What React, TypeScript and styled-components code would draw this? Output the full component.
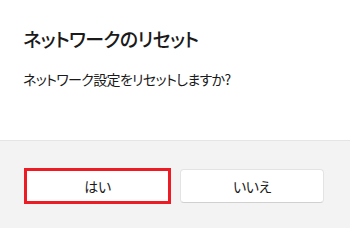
import styled, { createGlobalStyle } from "styled-components";

const GlobalStyle = createGlobalStyle`
  html, body {
    margin: 0;
    padding: 0;
    background: #ffffff;
  }
  body {
    font-family: "Noto Sans CJK JP", "Noto Sans", sans-serif;
    font-feature-settings: "palt";
    color: #1a1a1a;
  }
`;

const Dialog = styled.div`
  width: 350px;
  height: 228px;
  display: flex;
  flex-direction: column;
  background: #ffffff;
  overflow: hidden;
`;

const Content = styled.div`
  height: 140px;
  box-sizing: border-box;
  padding: 25px 24px 0 23px;
  display: flex;
  flex-direction: column;
  gap: 16px;
`;

const Title = styled.h1`
  margin: 0;
  font-size: 19px;
  line-height: 28px;
  font-weight: 500;
  letter-spacing: -0.6px;
`;

const Message = styled.p`
  margin: 0;
  font-size: 14px;
  line-height: 20px;
  font-weight: 400;
  letter-spacing: -0.65px;
`;

const Footer = styled.div`
  flex: 1;
  background: #f3f3f3;
  border-top: 1px solid #e5e5e5;
  box-sizing: border-box;
  padding: 27px 24px 0 24px;
  display: grid;
  grid-template-columns: 147px 144px;
  column-gap: 9px;
  align-items: start;
`;

const Button = styled.button<{ $focused?: boolean }>`
  box-sizing: border-box;
  height: ${(p) => (p.$focused ? "36px" : "34px")};
  margin-top: ${(p) => (p.$focused ? "0" : "1px")};
  background: #ffffff;
  border: ${(p) => (p.$focused ? "3px solid #ed1c24" : "1px solid #e3e3e3")};
  border-bottom-color: ${(p) => (p.$focused ? "#ed1c24" : "#d0d0d0")};
  border-radius: ${(p) => (p.$focused ? "0" : "4px")};
  font-family: inherit;
  font-feature-settings: "palt";
  font-size: 14px;
  letter-spacing: -0.4px;
  color: #1a1a1a;
  padding: 0;
  cursor: pointer;
`;

const App = () => {
  return (
    <>
      <GlobalStyle />
      <Dialog>
        <Content>
          <Title>ネットワークのリセット</Title>
          <Message>ネットワーク設定をリセットしますか?</Message>
        </Content>
        <Footer>
          <Button $focused>はい</Button>
          <Button>いいえ</Button>
        </Footer>
      </Dialog>
    </>
  );
};

export default App;
